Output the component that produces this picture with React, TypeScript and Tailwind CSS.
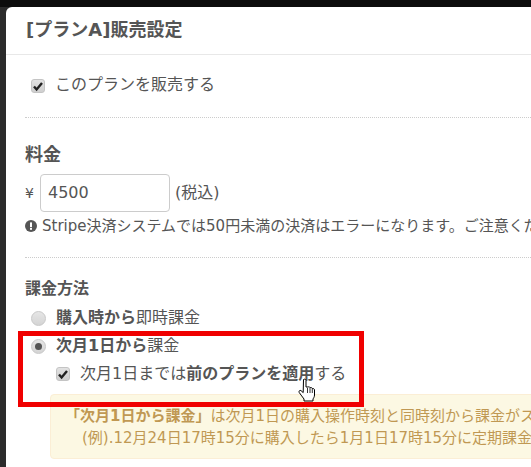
const font = { fontFamily: '"DejaVu Sans", "Noto Sans CJK JP", sans-serif' }

function Checkbox() {
  return (
    <span className="flex h-[14px] w-[14px] shrink-0 items-center justify-center rounded-[3px] border border-[#c4c4c4] bg-gradient-to-b from-[#e2e2e2] to-[#cfcfcf]">
      <svg viewBox="0 0 12 12" className="h-[12px] w-[12px]">
        <path d="M2 6.5 L4.6 9.5 L10 3" fill="none" stroke="#222" strokeWidth="2.4" />
      </svg>
    </span>
  )
}

function Radio({ checked }: { checked?: boolean }) {
  return (
    <span className="flex h-[15px] w-[15px] shrink-0 items-center justify-center rounded-full border border-[#c8c8c8] bg-gradient-to-b from-[#e6e6e6] to-[#d4d4d4]">
      {checked && <span className="h-[7px] w-[7px] rounded-full bg-[#555]" />}
    </span>
  )
}

function HandCursor() {
  return (
    <svg viewBox="0 0 18 24" className="absolute left-[298px] top-[378px] h-[24px] w-[18px]">
      <path
        d="M5.5 1.5 C6.5 0.8 8 1.2 8 2.5 L8 9 L10 9 C11 8.5 11.8 9 12 9.7 C13 9.2 14 9.6 14.2 10.5 C15.2 10.2 16.5 10.8 16.5 12 L16.5 17 C16.5 19 15.5 20 15 21 L15 23 L6 23 L6 21 C4.5 19 3 17 1.2 14.5 C0.5 13.2 1.8 11.8 3 12.6 L5.2 14.6 Z"
        fill="#fff"
        stroke="#000"
        strokeWidth="1"
      />
      <path d="M9.5 10 V15 M12 10 V15 M14.3 11 V15" stroke="#000" strokeWidth="0.8" />
    </svg>
  )
}

export default function App() {
  return (
    <div className="relative h-[467px] w-[531px] overflow-hidden bg-[#2b2b2b]" style={font}>
      <div className="h-[7px] bg-[#0c0c0c]" />
      <div className="ml-[6px] h-[460px] overflow-hidden rounded-tl-[6px] bg-white text-[16px] text-[#555]">
        <div className="flex h-[48px] items-center border-b border-[#e8e8e8] pl-[20px] pb-[2px]">
          <h1 className="text-[18px] font-bold whitespace-nowrap">[プランA]販売設定</h1>
        </div>

        <div className="ml-[19px] border-b border-dotted border-[#ccc] h-[63px] flex items-start pt-[21px]">
          <div className="ml-[6px] mt-[1px] flex items-center gap-[10px]">
            <Checkbox />
            <span className="whitespace-nowrap leading-[20px] -mt-[2px]">このプランを販売する</span>
          </div>
        </div>

        <div className="ml-[19px] h-[140px] border-b border-dotted border-[#ccc] pt-[27px]">
          <h2 className="text-[18px] leading-[20px] font-bold whitespace-nowrap">料金</h2>
          <div className="mt-[9px] flex items-center">
            <span className="w-[15px] text-[14px]">¥</span>
            <div className="flex h-[38px] w-[130px] items-center rounded-[4px] border border-[#ccc] px-[7px]">
              4500
            </div>
            <span className="ml-[5px] whitespace-nowrap">(税込)</span>
          </div>
          <p className="mt-[4px] flex items-center gap-[5px] text-[15px] leading-[20px] whitespace-nowrap">
            <svg viewBox="0 0 12 12" className="h-[12px] w-[12px] shrink-0">
              <circle cx="6" cy="6" r="6" fill="#555" />
              <rect x="5" y="2.4" width="2" height="4.8" fill="#fff" />
              <rect x="5" y="8" width="2" height="1.8" fill="#fff" />
            </svg>
            Stripe決済システムでは50円未満の決済はエラーになります。ご注意ください。
          </p>
        </div>

        <div className="ml-[19px] pt-[21px]">
          <h3 className="leading-[20px] font-bold whitespace-nowrap">課金方法</h3>
          <div className="mt-[9px] ml-[6px] flex h-[20px] items-center gap-[10px] whitespace-nowrap">
            <Radio />
            <span><b>購入時から</b>即時課金</span>
          </div>
          <div className="mt-[8px] ml-[6px] flex h-[20px] items-center gap-[10px] whitespace-nowrap">
            <Radio checked />
            <span><b>次月1日から</b>課金</span>
          </div>
          <div className="mt-[8px] ml-[31px] flex h-[20px] items-center gap-[10px] whitespace-nowrap">
            <Checkbox />
            <span>次月1日までは<b>前のプランを適用</b>する</span>
          </div>
          <div className="mt-[10px] ml-[25px] h-[65px] w-[600px] rounded-[4px] border border-[#fbeed5] bg-[#fcf8e3] pl-[14px] pt-[10px] text-[15px] leading-[22px] whitespace-nowrap text-[#c09853]">
            <p><b>「次月1日から課金」</b>は次月1日の購入操作時刻と同時刻から課金がスタートします。</p>
            <p className="pl-[17px]">(例).12月24日17時15分に購入したら1月1日17時15分に定期課金。</p>
          </div>
        </div>
      </div>

      <div className="absolute left-[18px] top-[331px] h-[76px] w-[346px] border-[5px] border-[#f00000]" />
      <HandCursor />
    </div>
  )
}
